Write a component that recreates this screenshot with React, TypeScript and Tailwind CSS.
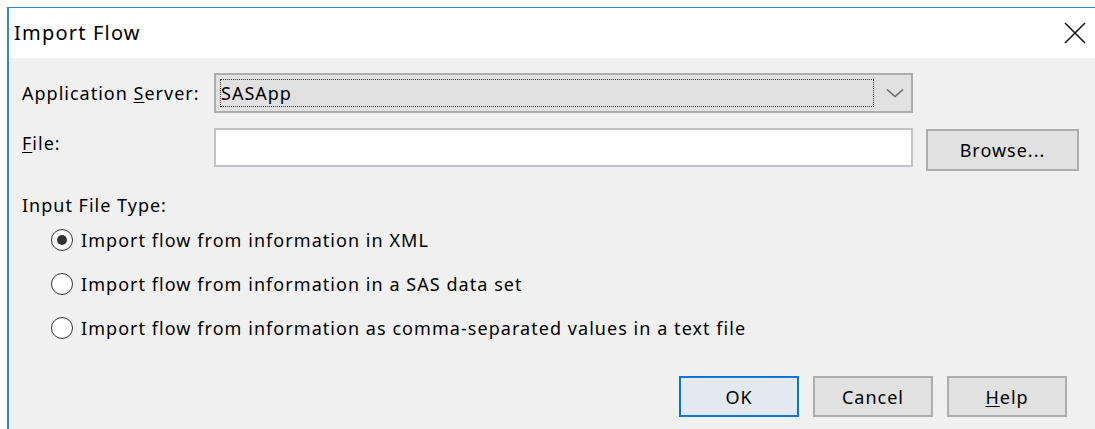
import React from "react";

const font = { fontFamily: '"Noto Sans", "Open Sans", sans-serif' };

function Radio({ checked, label }: { checked?: boolean; label: string }) {
  return (
    <div className="flex items-center h-[44px]">
      <span className="ml-[29px] flex h-[22px] w-[22px] items-center justify-center rounded-full border-[1.5px] border-[#333333] bg-white">
        {checked && <span className="h-[10px] w-[10px] rounded-full bg-[#333333]" />}
      </span>
      <span className="ml-[8px] text-[18px] leading-none tracking-[1.05px] text-black">{label}</span>
    </div>
  );
}

function Button({ children, primary, className = "" }: { children: React.ReactNode; primary?: boolean; className?: string }) {
  return (
    <div
      className={
        "flex items-center justify-center text-[18px] leading-none tracking-[1px] text-black " +
        (primary
          ? "border-2 border-[#0078d7] bg-[#e3e9ee] "
          : "border-2 border-[#adadad] bg-[#e1e1e1] ") +
        className
      }
    >
      {children}
    </div>
  );
}

export default function App() {
  return (
    <div className="h-[429px] w-[1095px] overflow-hidden bg-white" style={font}>
      <div className="ml-[7px] mt-[7px] h-[422px] border-l-2 border-t border-[#2b87d6] bg-[#f0f0f0]">
        {/* Title bar */}
        <div className="flex h-[50px] items-center justify-between bg-white pl-[5px] pr-[8px]">
          <span className="text-[20px] leading-none tracking-[1.2px] text-black">Import Flow</span>
          <svg width="22" height="22" viewBox="0 0 22 22" className="mr-[1px]">
            <path d="M1 1 L21 21 M21 1 L1 21" stroke="#1a1a1a" strokeWidth="1.6" />
          </svg>
        </div>

        <div className="pl-[13px]">
          {/* Application Server */}
          <div className="mt-[15px] flex h-[40px] items-center">
            <span className="w-[192px] text-[18px] leading-none tracking-[1px] text-black">
              Application <span className="underline underline-offset-2">S</span>erver:
            </span>
            <div className="flex h-[40px] w-[699px] items-center border-2 border-[#adadad] bg-[#e1e1e1]">
              <div className="ml-[4px] flex h-[28px] w-[654px] items-center border border-dotted border-[#333333]">
                <span className="text-[18px] leading-none tracking-[1px] text-black">SASApp</span>
              </div>
              <svg width="18" height="10" viewBox="0 0 18 10" className="ml-[12px]">
                <path d="M1 1.5 L9 8.5 L17 1.5" fill="none" stroke="#666666" strokeWidth="1.6" />
              </svg>
            </div>
          </div>

          {/* File */}
          <div className="mt-[15px] flex h-[43px] items-start">
            <span className="mt-[6px] w-[192px] text-[18px] leading-none tracking-[1px] text-black">
              <span className="underline underline-offset-2">F</span>ile:
            </span>
            <div className="h-[39px] w-[699px] border-2 border-[#c2c2c8] bg-white" />
            <Button className="ml-[13px] mt-[1px] h-[42px] w-[153px]">Browse...</Button>
          </div>

          {/* Input file type */}
          <div className="mt-[25px] text-[18px] leading-none tracking-[1px] text-black">Input File Type:</div>
          <div className="mt-[4px]">
            <Radio checked label="Import flow from information in XML" />
            <Radio label="Import flow from information in a SAS data set" />
            <Radio label="Import flow from information as comma-separated values in a text file" />
          </div>

          {/* Dialog buttons */}
          <div className="mt-[26px] flex justify-end gap-[14px] pr-[28px]">
            <Button primary className="h-[41px] w-[120px]">OK</Button>
            <Button className="h-[41px] w-[120px]">Cancel</Button>
            <Button className="h-[41px] w-[120px]">
              <span className="underline underline-offset-2">H</span>elp
            </Button>
          </div>
        </div>
      </div>
    </div>
  );
}
